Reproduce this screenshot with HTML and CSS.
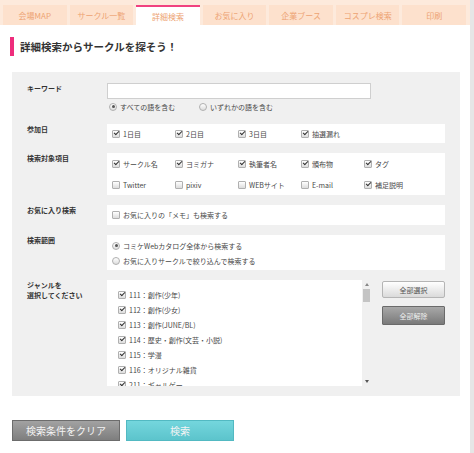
FILE: index.html
```html
<!DOCTYPE html>
<html lang="ja">
<head>
<meta charset="utf-8">
<title>詳細検索</title>
<link rel="stylesheet" href="styles.css">
</head>
<body>
<div class="page">
  <nav class="tabs">
    <span class="tab">会場MAP</span>
    <span class="tab">サークル一覧</span>
    <span class="tab active">詳細検索</span>
    <span class="tab">お気に入り</span>
    <span class="tab">企業ブース</span>
    <span class="tab">コスプレ検索</span>
    <span class="tab">印刷</span>
  </nav>

  <h1 class="heading">詳細検索からサークルを探そう！</h1>

  <section class="panel">
    <div class="row">
      <div class="label">キーワード</div>
      <div class="value">
        <div class="input"></div>
        <div class="radios-inline">
          <span class="opt"><span class="rb on"></span>すべての語を含む</span>
          <span class="opt"><span class="rb"></span>いずれかの語を含む</span>
        </div>
      </div>
    </div>

    <div class="row">
      <div class="label">参加日</div>
      <div class="value box grid-row h19">
        <span class="opt col"><span class="cb on"></span>1日目</span>
        <span class="opt col"><span class="cb on"></span>2日目</span>
        <span class="opt col"><span class="cb on"></span>3日目</span>
        <span class="opt col"><span class="cb on"></span>抽選漏れ</span>
      </div>
    </div>

    <div class="row">
      <div class="label">検索対象項目</div>
      <div class="value box">
        <div class="grid-row h21">
          <span class="opt col"><span class="cb on"></span>サークル名</span>
          <span class="opt col"><span class="cb on"></span>ヨミガナ</span>
          <span class="opt col"><span class="cb on"></span>執筆者名</span>
          <span class="opt col"><span class="cb on"></span>頒布物</span>
          <span class="opt col"><span class="cb on"></span>タグ</span>
        </div>
        <div class="grid-row h21">
          <span class="opt col"><span class="cb"></span>Twitter</span>
          <span class="opt col"><span class="cb"></span>pixiv</span>
          <span class="opt col"><span class="cb"></span>WEBサイト</span>
          <span class="opt col"><span class="cb"></span>E-mail</span>
          <span class="opt col"><span class="cb on"></span>補足説明</span>
        </div>
      </div>
    </div>

    <div class="row">
      <div class="label">お気に入り検索</div>
      <div class="value box grid-row h20">
        <span class="opt"><span class="cb"></span>お気に入りの「メモ」も検索する</span>
      </div>
    </div>

    <div class="row">
      <div class="label">検索範囲</div>
      <div class="value box stack">
        <span class="opt line15"><span class="rb on"></span>コミケWebカタログ全体から検索する</span>
        <span class="opt line15"><span class="rb"></span>お気に入りサークルで絞り込んで検索する</span>
      </div>
    </div>

    <div class="row">
      <div class="label">ジャンルを<br>選択してください</div>
      <div class="value genre-wrap">
        <div class="genre">
          <div class="genre-list">
            <span class="opt line15"><span class="cb on"></span>111：創作(少年)</span>
            <span class="opt line15"><span class="cb on"></span>112：創作(少女)</span>
            <span class="opt line15"><span class="cb on"></span>113：創作(JUNE/BL)</span>
            <span class="opt line15"><span class="cb on"></span>114：歴史・創作(文芸・小説)</span>
            <span class="opt line15"><span class="cb on"></span>115：学漫</span>
            <span class="opt line15"><span class="cb on"></span>116：オリジナル雑貨</span>
            <span class="opt line15"><span class="cb on"></span>211：ギャルゲー</span>
          </div>
          <div class="scrollbar">
            <span class="arrow up"></span>
            <span class="thumb"></span>
            <span class="arrow down"></span>
          </div>
        </div>
        <div class="side-buttons">
          <button class="btn-light">全部選択</button>
          <button class="btn-dark">全部解除</button>
        </div>
      </div>
    </div>
  </section>

  <div class="actions">
    <button class="btn-clear">検索条件をクリア</button>
    <button class="btn-search">検索</button>
  </div>
</div>
</body>
</html>
```

FILE: styles.css
```css
* { box-sizing: border-box; }

html, body {
  margin: 0;
  padding: 0;
  background: #ffffff;
}

body {
  font-family: "Noto Sans CJK JP", "Noto Sans", sans-serif;
  color: #333333;
  font-size: 7px;
}

.page {
  width: 474px;
  height: 453px;
  border-right: 4px solid #e6e6e6;
  overflow: hidden;
}

/* Tabs */
.tabs {
  display: flex;
  gap: 3px;
  padding: 5px 4px 0 3px;
  height: 25px;
  background: #fdeadc;
}

.tab {
  flex: 1;
  height: 20px;
  background: #fde1cd;
  color: #eda373;
  font-size: 8px;
  display: flex;
  align-items: center;
  justify-content: center;
}

.tab.active {
  background: #ffffff;
  border-top: 2px solid #f0417f;
}

/* Heading */
.heading {
  margin: 12px 0 0 10px;
  height: 19px;
  border-left: 4px solid #ee2d7c;
  padding-left: 6px;
  font-size: 10.5px;
  font-weight: bold;
  line-height: 19px;
  color: #333333;
}

/* Panel */
.panel {
  margin: 16px 0 0 12px;
  width: 448px;
  background: #f0f0f0;
  padding: 11px 15px 10px 15px;
  display: flex;
  flex-direction: column;
  gap: 10px;
}

.row {
  display: flex;
}

.label {
  width: 80px;
  flex: none;
  font-weight: bold;
  font-size: 7px;
  line-height: 10px;
  color: #333333;
}

.value {
  flex: 1;
}

.box {
  background: #ffffff;
  padding: 0 0 0 5px;
}

.input {
  width: 264px;
  height: 16px;
  background: #ffffff;
  border: 1px solid #cfcfcf;
}

.radios-inline {
  display: flex;
  height: 15px;
  align-items: center;
  padding-left: 2px;
}

.radios-inline .opt { width: 90px; }

.grid-row {
  display: flex;
  align-items: center;
}

.h19 { height: 19px; }
.h20 { height: 20px; }
.h21 { height: 21px; }

.col { width: 63px; flex: none; }

.opt {
  display: flex;
  align-items: center;
  gap: 3px;
  white-space: nowrap;
  color: #484848;
}

.line15 { height: 15px; flex: none; }

.stack {
  display: flex;
  flex-direction: column;
  padding-top: 3px;
  padding-bottom: 2px;
}

/* Checkbox */
.cb {
  position: relative;
  width: 8px;
  height: 8px;
  flex: none;
  border: 1px solid #b0b0b0;
  border-radius: 1px;
  background: linear-gradient(#ffffff, #dcdcdc);
}

.cb.on::after {
  content: "";
  position: absolute;
  left: 1px;
  top: 0.5px;
  width: 4px;
  height: 2px;
  border-left: 1.5px solid #333333;
  border-bottom: 1.5px solid #333333;
  transform: rotate(-45deg);
}

/* Radio */
.rb {
  position: relative;
  width: 8px;
  height: 8px;
  flex: none;
  border: 1px solid #b0b0b0;
  border-radius: 50%;
  background: linear-gradient(#ffffff, #dddddd);
}

.rb.on::after {
  content: "";
  position: absolute;
  left: 1.5px;
  top: 1.5px;
  width: 3px;
  height: 3px;
  border-radius: 50%;
  background: #555555;
}

/* Genre */
.genre-wrap {
  display: flex;
  align-items: flex-start;
  gap: 11px;
}

.genre {
  display: flex;
  width: 264px;
  height: 106px;
  background: #ffffff;
}

.genre-list {
  flex: 1;
  overflow: hidden;
  padding: 7px 0 0 11px;
  display: flex;
  flex-direction: column;
}

.scrollbar {
  width: 9px;
  background: #f0f0f0;
  display: flex;
  flex-direction: column;
  align-items: center;
  padding: 3px 0 3px;
}

.arrow {
  width: 0;
  height: 0;
  border-left: 2px solid transparent;
  border-right: 2px solid transparent;
}

.arrow.up { border-bottom: 3px solid #888888; }
.arrow.down { border-top: 3px solid #555555; margin-top: auto; }

.thumb {
  width: 7px;
  height: 13px;
  margin-top: 3px;
  background: #c4c4c4;
}

.side-buttons {
  display: flex;
  flex-direction: column;
  gap: 8px;
  padding-top: 1px;
}

.side-buttons button {
  width: 63px;
  font-family: inherit;
  font-size: 7px;
  padding: 0;
  cursor: pointer;
}

.btn-light {
  height: 17px;
  border: 1px solid #b5b5b5;
  border-radius: 2px;
  background: linear-gradient(#ffffff, #dadada);
  color: #555555;
}

.btn-dark {
  height: 19px;
  border: 1px solid #6a6a6a;
  border-radius: 1px;
  background: linear-gradient(#a8a8a8, #7a7a7a);
  color: #eeeeee;
}

/* Actions */
.actions {
  display: flex;
  gap: 6px;
  margin: 24px 0 0 12px;
}

.actions button {
  width: 108px;
  height: 21px;
  font-family: inherit;
  font-size: 10px;
  color: #f4f4f4;
  padding: 0;
  cursor: pointer;
}

.btn-clear {
  border: 1px solid #6c6c6c;
  background: linear-gradient(#a2a2a2, #7e7e7e);
}

.btn-search {
  border: 1px solid #52b9c2;
  background: linear-gradient(#74d6dd, #5cc4cc);
}
```
